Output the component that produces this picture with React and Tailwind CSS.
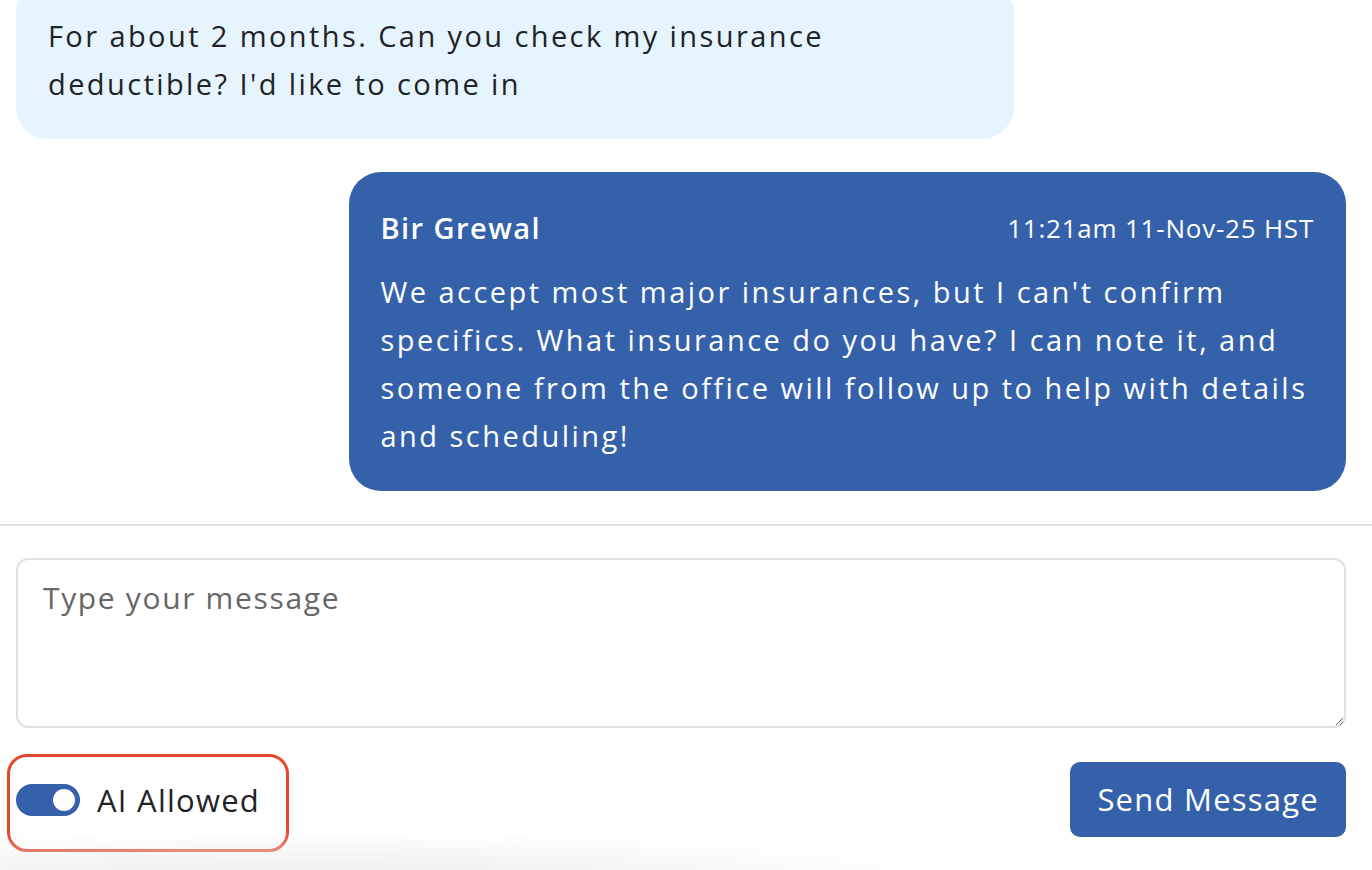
import { useState } from 'react';

const font = { fontFamily: '"Open Sans", "Liberation Sans", sans-serif' };

export default function App() {
  const [aiAllowed, setAiAllowed] = useState(true);
  const [text, setText] = useState('');

  return (
    <div className="relative w-full h-[870px] overflow-hidden bg-white text-[#1f2328] flex flex-col" style={font}>
      {/* messages */}
      <div className="pl-4 pr-[26px] flex flex-col">
        <div className="w-[75%] -mt-[20px] rounded-[32px] bg-[#e6f5fd] px-8 pt-8 pb-[31px] text-[29px] leading-[48px] tracking-[0.083em]">
          For about 2 months. Can you check my insurance deductible? I'd like to come in
        </div>

        <div className="self-end w-[75%] mt-[33px] rounded-[32px] bg-[#3461aa] text-white p-8 pb-[31px]">
          <div className="flex items-center justify-between mb-4 leading-[48px]">
            <span className="text-[29px] font-semibold tracking-[0.05em]">Bir Grewal</span>
            <span className="text-[26px] tracking-[0.03em]">11:21am 11-Nov-25 HST</span>
          </div>
          <p className="text-[29px] leading-[48px] tracking-[0.085em]">
            We accept most major insurances, but I can't confirm specifics. What insurance do you have? I can note it, and someone from the office will follow up to help with details and scheduling!
          </p>
        </div>
      </div>

      <div className="mt-[33px] h-[2px] bg-[#dedfe1]" />

      {/* composer */}
      <div className="pl-4 pr-[26px] pt-8">
        <textarea
          value={text}
          onChange={(e) => setText(e.target.value)}
          placeholder="Type your message"
          className="block w-full h-[170px] rounded-[12px] border-2 border-[#dfe1e4] px-[25px] pt-4 text-[30px] leading-[44px] tracking-[0.055em] placeholder:text-[#666] outline-none"
          style={font}
        />

        <div className="mt-[34px] flex items-center justify-between">
          <div className="relative flex items-center gap-[17px]">
            <button
              onClick={() => setAiAllowed(!aiAllowed)}
              className={`w-16 h-8 rounded-full flex items-center px-[5px] ${aiAllowed ? 'bg-[#3461aa] justify-end' : 'bg-gray-300 justify-start'}`}
            >
              <span className="w-[22px] h-[22px] rounded-full bg-white" />
            </button>
            <span className="text-[31px] leading-[40px] tracking-[0.04em]">AI Allowed</span>
            <div className="pointer-events-none absolute -left-[9px] -top-[26px] w-[282px] h-[98px] rounded-[20px] border-[3px] border-[#e5472d]" />
          </div>

          <button className="h-[75px] px-[27px] rounded-[10px] bg-[#3461aa] text-white text-[31px] tracking-[0.04em]">
            Send Message
          </button>
        </div>
      </div>

      <div className="pointer-events-none absolute bottom-0 left-0 w-[1000px] h-[50px] bg-[radial-gradient(ellipse_700px_50px_at_300px_60px,#ececec,rgba(255,255,255,0))]" />
    </div>
  );
}
